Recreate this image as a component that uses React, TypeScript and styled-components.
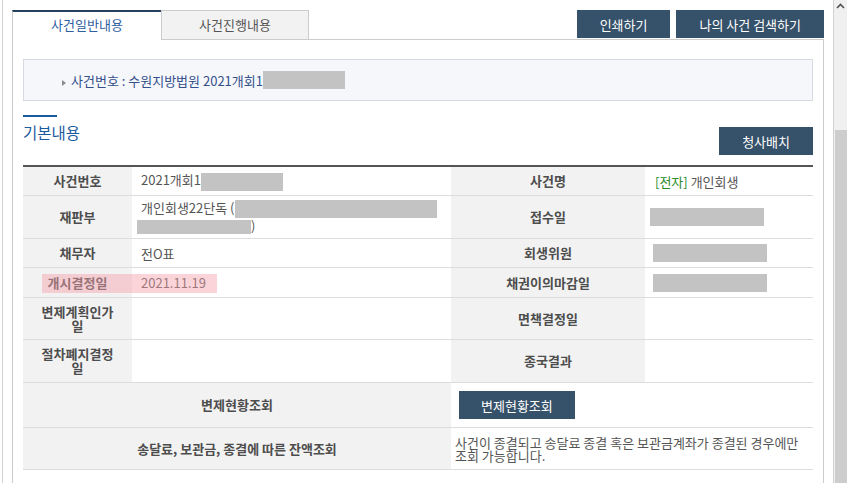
import React from "react";
import styled, { createGlobalStyle } from "styled-components";

const GlobalStyle = createGlobalStyle`
  html, body { margin: 0; padding: 0; background: #fff; overflow: hidden; }
  body {
    font-family: "Noto Sans CJK KR", "Noto Sans", sans-serif;
    font-size: 13px;
    color: #555;
  }
  * { box-sizing: border-box; }
`;

const Viewport = styled.div`
  display: flex;
  width: 847px;
  height: 483px;
  overflow: hidden;
`;

const Frame = styled.div`
  flex: 1;
  margin-left: 2px;
  border-left: 1px solid #d4d4d4;
  padding: 10px 9px 0 9px;
  display: flex;
  flex-direction: column;
`;

const TopRow = styled.div`
  display: flex;
  align-items: flex-end;
  height: 29px;
`;

const Tabs = styled.div`
  display: flex;
  align-items: flex-end;
  height: 100%;
`;

const Tab = styled.div<{ $active?: boolean }>`
  width: ${(p) => (p.$active ? "149px" : "148px")};
  height: ${(p) => (p.$active ? "30px" : "29px")};
  margin-bottom: ${(p) => (p.$active ? "-1px" : "0")};
  position: relative;
  z-index: ${(p) => (p.$active ? 1 : 0)};
  display: flex;
  align-items: center;
  justify-content: center;
  font-size: 13px;
  background: ${(p) => (p.$active ? "#fff" : "#f2f2f2")};
  color: ${(p) => (p.$active ? "#2f5f9f" : "#555")};
  border-left: 1px solid #cccccc;
  border-top: ${(p) => (p.$active ? "2px solid #26405e" : "1px solid #cccccc")};
  border-right: ${(p) => (p.$active ? "none" : "1px solid #cccccc")};
  padding-bottom: ${(p) => (p.$active ? "3px" : "1px")};
`;

const ButtonGroup = styled.div`
  margin-left: auto;
  display: flex;
  gap: 6px;
  margin-bottom: 1px;
`;

const DarkButton = styled.button`
  height: 28px;
  padding: 0 23px;
  border: none;
  background: #36516a;
  color: #fff;
  font-family: inherit;
  font-size: 13px;
  cursor: pointer;
  white-space: nowrap;
`;

const Panel = styled.div`
  flex: 1;
  border: 1px solid #cccccc;
  border-bottom: none;
  padding: 19px 10px 0 10px;
`;

const CaseBox = styled.div`
  height: 42px;
  background: #f5f7fb;
  border: 1px solid #d5d9e2;
  display: flex;
  align-items: center;
  padding-left: 38px;
  color: #34508a;
  font-size: 13px;
`;

const Bullet = styled.span`
  width: 0;
  height: 0;
  border-left: 4px solid #8a8a8a;
  border-top: 3px solid transparent;
  border-bottom: 3px solid transparent;
  margin: 5px 5px 0 0;
`;

const Redact = styled.span<{ $w: number; $h?: number; $dx?: number }>`
  display: inline-block;
  width: ${(p) => p.$w}px;
  height: ${(p) => p.$h ?? 18}px;
  margin-left: ${(p) => p.$dx ?? 0}px;
  background: #c3c3c3;
  vertical-align: middle;
`;

const HeadRow = styled.div`
  margin-top: 14px;
  display: flex;
  justify-content: space-between;
  align-items: flex-start;
`;

const Title = styled.h2`
  margin: 0;
  font-size: 15.5px;
  font-weight: normal;
  line-height: 20px;
  color: #1c5aa0;
  &::before {
    content: "";
    display: block;
    width: 34px;
    height: 2px;
    background: #1c5aa0;
    margin-bottom: 5px;
  }
`;

const HeadButton = styled(DarkButton)`
  margin-top: 12px;
`;

const InfoGrid = styled.div`
  position: relative;
  margin-top: 10px;
  border-top: 2px solid #555;
  display: grid;
  grid-template-columns: 109px 319px 194px 168px;
  grid-template-rows: 29px 43px 29px 30px 42px 43px 45px 42px;
`;

const Th = styled.div<{ $span?: number }>`
  grid-column: span ${(p) => p.$span ?? 1};
  background: #f2f2f2;
  border-bottom: 1px solid #dddddd;
  display: flex;
  align-items: center;
  justify-content: center;
  text-align: center;
  padding: 0 13px;
  font-weight: 700;
  color: #4d4d4d;
  line-height: 14px;
`;

const Td = styled.div<{ $span?: number; $pl?: number }>`
  grid-column: span ${(p) => p.$span ?? 1};
  background: #fff;
  border-bottom: 1px solid #dddddd;
  display: flex;
  align-items: center;
  padding: 0 6px 0 ${(p) => p.$pl ?? 9}px;
  color: #555;
  line-height: 17px;
`;

const TdText = styled.div<{ $lh?: number }>`
  line-height: ${(p) => p.$lh ?? 17}px;
`;

const Green = styled.span`
  color: #2a8c2a;
`;

const SmallButton = styled(DarkButton)`
  padding: 0 22px;
`;

const HighlightMark = styled.div`
  position: absolute;
  top: 107px;
  left: 19px;
  width: 175px;
  height: 19px;
  background: rgba(245, 160, 170, 0.45);
  pointer-events: none;
`;

const Scrollbar = styled.div`
  width: 14px;
  height: 100%;
  background: #f0f0f0;
  border-left: 1px solid #d0d0d0;
  display: flex;
  flex-direction: column;
`;

const ArrowBtn = styled.div`
  height: 12px;
  display: flex;
  align-items: center;
  justify-content: center;
`;

const Thumb = styled.div`
  flex: 1;
  margin: 118px 0 0 1px;
  background: #cdcdcd;
`;

export default function App() {
  return (
    <>
      <GlobalStyle />
      <Viewport>
        <Frame>
          <TopRow>
            <Tabs>
              <Tab $active>사건일반내용</Tab>
              <Tab>사건진행내용</Tab>
            </Tabs>
            <ButtonGroup>
              <DarkButton>인쇄하기</DarkButton>
              <DarkButton>나의 사건 검색하기</DarkButton>
            </ButtonGroup>
          </TopRow>
          <Panel>
            <CaseBox>
              <Bullet />
              <span>사건번호 : 수원지방법원 2021개회1</span>
              <Redact $w={82} />
            </CaseBox>
            <HeadRow>
              <Title>기본내용</Title>
              <HeadButton>청사배치</HeadButton>
            </HeadRow>
            <InfoGrid>
              <Th>사건번호</Th>
              <Td>
                <TdText>
                  2021개회1
                  <Redact $w={82} />
                </TdText>
              </Td>
              <Th>사건명</Th>
              <Td $pl={10}>
                <TdText>
                  <Green>[전자]</Green> 개인회생
                </TdText>
              </Td>

              <Th>재판부</Th>
              <Td>
                <TdText $lh={16}>
                  개인회생22단독 (
                  <Redact $w={202} />
                  <br />
                  <Redact $w={114} $h={14} $dx={-4} />)
                </TdText>
              </Td>
              <Th>접수일</Th>
              <Td $pl={5}>
                <Redact $w={114} />
              </Td>

              <Th>채무자</Th>
              <Td>
                <TdText>전O표</TdText>
              </Td>
              <Th>회생위원</Th>
              <Td $pl={8}>
                <Redact $w={114} />
              </Td>

              <Th>개시결정일</Th>
              <Td>
                <TdText>2021.11.19</TdText>
              </Td>
              <Th>채권이의마감일</Th>
              <Td $pl={8}>
                <Redact $w={114} />
              </Td>

              <Th>변제계획인가일</Th>
              <Td />
              <Th>면책결정일</Th>
              <Td />

              <Th>절차폐지결정일</Th>
              <Td />
              <Th>종국결과</Th>
              <Td />

              <Th $span={2}>변제현황조회</Th>
              <Td $span={2} $pl={8}>
                <SmallButton>변제현황조회</SmallButton>
              </Td>

              <Th $span={2}>송달료, 보관금, 종결에 따른 잔액조회</Th>
              <Td $span={2} $pl={4}>
                <TdText $lh={13}>
                  사건이 종결되고 송달료 종결 혹은 보관금계좌가 종결된 경우에만 조회 가능합니다.
                </TdText>
              </Td>

              <HighlightMark />
            </InfoGrid>
          </Panel>
        </Frame>
        <Scrollbar>
          <ArrowBtn>
            <svg width="9" height="6" viewBox="0 0 9 6">
              <polyline points="1,5 4.5,1.5 8,5" fill="none" stroke="#505050" strokeWidth="1.6" />
            </svg>
          </ArrowBtn>
          <Thumb />
        </Scrollbar>
      </Viewport>
    </>
  );
}
